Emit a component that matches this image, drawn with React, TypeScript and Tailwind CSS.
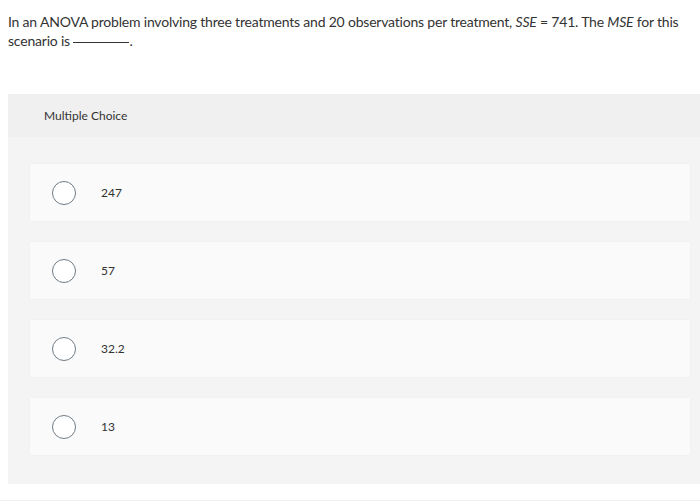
const choices = ['247', '57', '32.2', '13'];

export default function App() {
  return (
    <div className="w-[700px] h-[504px] bg-white overflow-hidden font-['Lato',sans-serif] text-[#333]">
      <p className="px-2 pt-[12px] text-[14px] leading-[19px] tracking-[-0.2px]">
        In an ANOVA problem involving three treatments and 20 observations per treatment, <i>SSE</i> = 741. The <i>MSE</i> for this scenario is{' '}
        <span className="inline-block w-[56px] border-b border-[#333] translate-y-[-3px]" />.
      </p>

      <div className="ml-2 mt-[44px] w-[692px] bg-[#f4f4f4]">
        <div className="h-[43px] bg-[#f0f0f0] pl-[36px] flex items-center text-[12px] text-[#333]">
          Multiple Choice
        </div>
        <div className="pt-[27px] pb-[29px] pl-[22px] pr-[10px] flex flex-col gap-[21px]">
          {choices.map((c) => (
            <div key={c} className="h-[57px] bg-[#fafafa] shadow-[0_0_2px_rgba(0,0,0,0.04)] flex items-center">
              <div className="ml-[22px] w-[24px] h-[24px] rounded-full border-[1.5px] border-[#707a85] bg-white" />
              <span className="ml-[25px] text-[12px] text-[#333]">{c}</span>
            </div>
          ))}
        </div>
      </div>
      <div className="mt-[16px] h-px bg-[#f2f2f2]" />
    </div>
  );
}
